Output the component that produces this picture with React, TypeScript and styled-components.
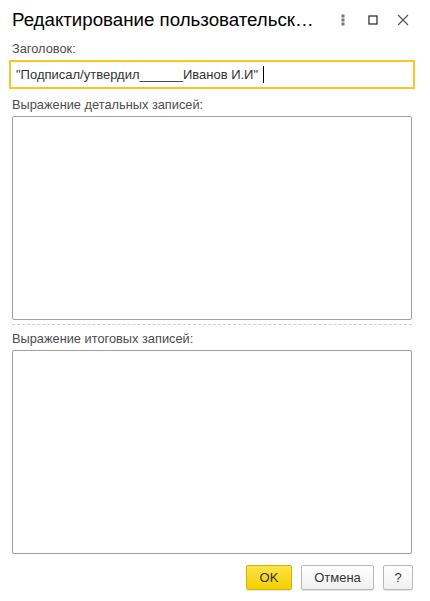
import React from 'react';
import styled, { createGlobalStyle } from 'styled-components';

const GlobalStyle = createGlobalStyle`
  html, body {
    margin: 0;
    padding: 0;
    background: #fff;
  }
  body {
    font-family: "Liberation Sans", Arial, sans-serif;
  }
`;

const Window = styled.div`
  width: 430px;
  height: 601px;
  box-sizing: border-box;
  padding: 0 18px 0 12px;
  display: flex;
  flex-direction: column;
  background: #fff;
`;

const Header = styled.div`
  height: 38px;
  display: flex;
  align-items: center;
  padding-top: 1px;
  box-sizing: border-box;
`;

const Title = styled.div`
  flex: 1;
  font-size: 18.7px;
  color: #000;
  white-space: nowrap;
  overflow: hidden;
`;

const HeaderButtons = styled.div`
  display: flex;
  align-items: center;
  margin-right: -6px;
`;

const IconButton = styled.div`
  width: 30px;
  height: 24px;
  display: flex;
  align-items: center;
  justify-content: center;
  color: #333;
`;

const Label = styled.div<{ $top: number }>`
  margin-top: ${p => p.$top}px;
  font-size: 12.8px;
  line-height: 16px;
  color: #4d4d4d;
`;

const TitleInput = styled.div`
  margin: 3px -3px 0 -3px;
  height: 29px;
  box-sizing: border-box;
  border: 2px solid #f5c825;
  display: flex;
  align-items: center;
  padding-left: 5px;
  font-size: 13px;
  color: #333;
`;

const Caret = styled.span`
  display: inline-block;
  width: 1px;
  height: 17px;
  background: #000;
  margin-left: 5px;
`;

const TextArea = styled.div<{ $height: number }>`
  margin-top: 3px;
  height: ${p => p.$height}px;
  box-sizing: border-box;
  border: 1px solid #a0a0a0;
  border-radius: 2px;
  background: #fff;
`;

const Separator = styled.div`
  margin-top: 4px;
  border-top: 1px dashed #d0d0d0;
`;

const Footer = styled.div`
  margin-top: 11px;
  display: flex;
  justify-content: flex-end;
  gap: 9px;
  margin-right: -1px;
`;

const Button = styled.div<{ $primary?: boolean; $width: number }>`
  width: ${p => p.$width}px;
  height: 25px;
  box-sizing: border-box;
  display: flex;
  align-items: center;
  justify-content: center;
  border-radius: 2px;
  font-size: 13px;
  border: 1px solid ${p => (p.$primary ? '#d7b400' : '#b9b9b9')};
  background: ${p =>
    p.$primary
      ? 'linear-gradient(#fbe34a, #f4d000)'
      : 'linear-gradient(#ffffff, #f0f0f0)'};
  color: #333;
  box-shadow: 0 1px 1px rgba(0, 0, 0, 0.1);
`;

const App = () => {
  return (
    <Window>
      <GlobalStyle />
      <Header>
        <Title>Редактирование пользовательск…</Title>
        <HeaderButtons>
          <IconButton>
            <svg width="4" height="12" viewBox="0 0 4 12">
              <rect x="0.5" y="0.5" width="3" height="3" fill="#777" />
              <rect x="0.5" y="4.5" width="3" height="3" fill="#777" />
              <rect x="0.5" y="8.5" width="3" height="3" fill="#777" />
            </svg>
          </IconButton>
          <IconButton>
            <svg width="10" height="10" viewBox="0 0 10 10">
              <rect x="1" y="1" width="8" height="8" fill="none" stroke="#333" strokeWidth="1.3" />
            </svg>
          </IconButton>
          <IconButton>
            <svg width="12" height="12" viewBox="0 0 12 12">
              <path d="M1 1 L11 11 M11 1 L1 11" stroke="#555" strokeWidth="1.2" />
            </svg>
          </IconButton>
        </HeaderButtons>
      </Header>
      <Label $top={3}>Заголовок:</Label>
      <TitleInput>
        "Подписал/утвердил______Иванов И.И"
        <Caret />
      </TitleInput>
      <Label $top={8}>Выражение детальных записей:</Label>
      <TextArea $height={204} />
      <Separator />
      <Label $top={6}>Выражение итоговых записей:</Label>
      <TextArea $height={204} />
      <Footer>
        <Button $primary $width={46}>OK</Button>
        <Button $width={73}>Отмена</Button>
        <Button $width={30}>?</Button>
      </Footer>
    </Window>
  );
};

export default App;
